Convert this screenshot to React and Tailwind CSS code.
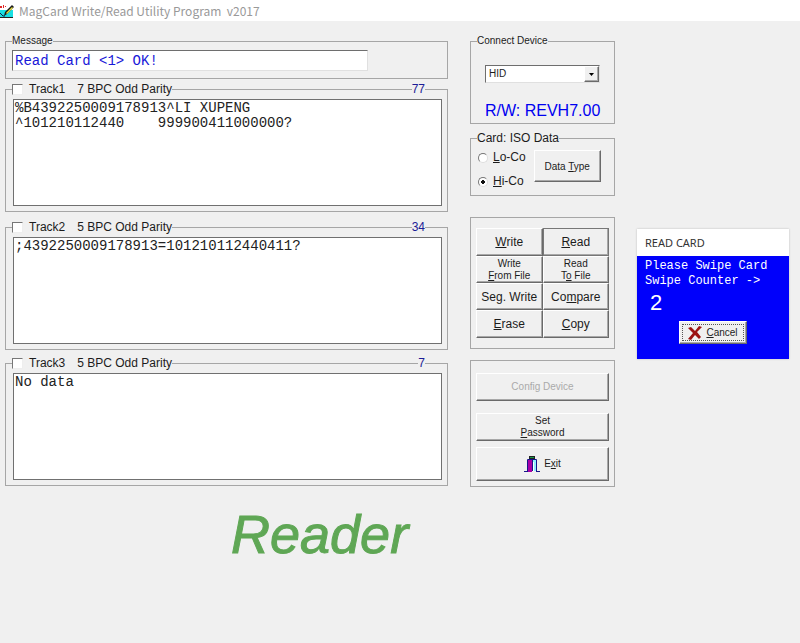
import React, { useState } from "react";

const SANS = "font-['Liberation_Sans',Arial,sans-serif]";
const MONO = "font-['Liberation_Mono','Courier_New',monospace]";
const FRAME = "min-w-0 border border-[#a6a6a6]";
const SUNKEN = "border border-t-[#6e6e6e] border-l-[#6e6e6e] border-r-[#e0e0e0] border-b-[#e0e0e0] bg-white";
const RAISED =
  "border border-t-white border-l-white border-r-[#6a6a6a] border-b-[#6a6a6a] bg-[#f0f0f0] shadow-[inset_-1px_-1px_0_#a8a8a8]";

function Line({ className }) {
  return <span className={`h-px bg-[#a6a6a6] ${className}`} />;
}

function Track({ number, format, count, value, className }) {
  const [text, setText] = useState(value);
  const id = `track${number}`;
  return (
    <fieldset className={`${FRAME} ${className}`}>
      <legend className="flex h-[14px] w-full items-center text-[12px] leading-[14px]">
        <Line className="w-1.5" />
        <input
          id={id}
          type="checkbox"
          className="h-[11px] w-[11px] appearance-none border border-t-[#777] border-l-[#777] border-r-[#eee] border-b-[#eee] bg-white checked:bg-[#444]"
        />
        <label htmlFor={id} className="flex gap-3 pl-1.5">
          <span>Track{number}</span>
          <span>{format} Odd Parity</span>
        </label>
        <Line className="flex-1" />
        <span className="text-[#1c1c96]">{count}</span>
        <Line className="w-[22px]" />
      </legend>
      <div className="pt-[3px] pr-[5px] pb-[5px] pl-[7px]">
        <textarea
          aria-label={`Track ${number} data`}
          spellCheck={false}
          value={text}
          onChange={(e) => setText(e.target.value)}
          className={`block h-[107px] w-full resize-none border border-[#707070] bg-white px-px py-px text-[14px] leading-[15px] text-[#222] outline-none ${MONO}`}
        />
      </div>
    </fieldset>
  );
}

function PushButton({ className = "", children, ...rest }) {
  return (
    <button type="button" className={`flex items-center justify-center text-center ${RAISED} ${className}`} {...rest}>
      {children}
    </button>
  );
}

function AppIcon() {
  return (
    <svg width="15" height="16" viewBox="0 0 15 16" aria-hidden="true">
      <path d="M0 7h13v8H0z" fill="#19dfe3" />
      <path d="M0 14h13v1H0z" fill="#222" />
      <path d="M0 3h2v2H0zM3 2h1v3H3zM5 3h1v1H5z" fill="#e02828" />
      <path d="M4 13l1-4 7-7 2 2-7 7z" fill="#1a1a1a" />
      <path d="M6 10l6-6 1 1-6 6z" fill="#e2dc3c" />
      <path d="M0 10l3 3h2" stroke="#124" fill="none" />
    </svg>
  );
}

function ExitIcon() {
  return (
    <svg width="16" height="17" viewBox="0 0 16 17" aria-hidden="true">
      <path d="M5 0h6v3H5z" fill="#222" />
      <path d="M6 1h4v1H6z" fill="#159a48" />
      <path d="M8 4h4v11H8z" fill="#8fefff" />
      <path d="M9 6h1v9H9z" fill="#fff" />
      <path d="M4 4h4v12H4z" fill="#a800a8" />
      <path d="M3.500 15.500V3.500h9v12M8.500 4v11" stroke="#16168a" fill="none" />
      <path d="M0 15.500h4M12 15.500h4" stroke="#16168a" />
    </svg>
  );
}

function CancelIcon() {
  return (
    <svg width="14" height="14" viewBox="0 0 14 14" aria-hidden="true">
      <path d="M0 2l3-1 4 4 4-5 3 1-5 5 4 5-2 2-4-4-4 5-3-1 5-6z" fill="#9c1212" />
    </svg>
  );
}

export default function App() {
  const [message, setMessage] = useState("Read Card <1> OK!");
  return (
    <div className={`min-h-screen bg-[#f0f0f0] text-[#1c1c1c] ${SANS}`}>
      <header className="flex h-[21px] items-center gap-1 bg-white">
        <AppIcon />
        <h1 className="whitespace-pre font-['Noto_Sans_CJK_SC','Noto_Sans',sans-serif] text-[12px] leading-[16px] text-[#999]">
          {"MagCard Write/Read Utility Program  v2017"}
        </h1>
      </header>

      <main className="flex items-start gap-[22px] pt-[14px] pr-[11px] pl-[5px]">
        <div className="min-w-0 flex-1">
          <fieldset className={FRAME}>
            <legend className="ml-1.5 h-3 text-[10px] leading-3">
              <label htmlFor="message">Message</label>
            </legend>
            <div className="pt-[3px] pr-[79px] pb-[7px] pl-1.5">
              <input
                id="message"
                value={message}
                onChange={(e) => setMessage(e.target.value)}
                className={`block h-[21px] w-full px-0.5 text-[14px] leading-[16px] text-[#1818d8] outline-none ${SUNKEN} ${MONO}`}
              />
            </div>
          </fieldset>
          <Track
            number={1}
            format="7 BPC"
            count={77}
            value={"%B4392250009178913^LI XUPENG\n^101210112440    999900411000000?"}
            className="mt-[3px]"
          />
          <Track number={2} format="5 BPC" count={34} value=";4392250009178913=101210112440411?" className="mt-2" />
          <Track number={3} format="5 BPC" count={7} value="No data" className="mt-1.5" />
          <p className="mt-[18px] ml-[226px] text-[54px] leading-[60px] text-[#5fa755] italic [-webkit-text-stroke:1px_#5fa755]">
            Reader
          </p>
        </div>

        <div className="w-[145px] shrink-0">
          <fieldset className={`${FRAME} pb-0.5`}>
            <legend className="ml-1.5 h-3 text-[10px] leading-3">
              <label htmlFor="device">Connect Device</label>
            </legend>
            <div className="relative mx-[14px] mt-[18px]">
              <select
                id="device"
                className={`block h-[18px] w-full appearance-none pl-[3px] text-[10px] leading-3 outline-none ${SUNKEN}`}
              >
                <option>HID</option>
              </select>
              <span
                className={`pointer-events-none absolute top-px right-px flex h-4 w-[15px] items-center justify-center ${RAISED}`}
              >
                <svg width="5" height="3" viewBox="0 0 5 3" aria-hidden="true">
                  <path d="M0 0h5L2.500 3z" fill="#000" />
                </svg>
              </span>
            </div>
            <p className="mt-[18px] pl-[14px] text-[16px] leading-[20px] whitespace-nowrap text-[#0000f0]">
              R/W: REVH7.00
            </p>
          </fieldset>

          <fieldset className={`${FRAME} mt-[7px]`}>
            <legend className="ml-1.5 h-[14px] text-[12px] leading-[14px]">Card: ISO Data</legend>
            <div className="flex gap-2 pt-[5px] pb-1.5 pl-[7px]">
              <div className="flex flex-col gap-[9px] text-[12px] leading-[15px]">
                {[
                  ["L", "o-Co", false],
                  ["H", "i-Co", true],
                ].map(([key, rest, on]) => (
                  <label key={key} className="flex items-center gap-[5px]">
                    <input
                      type="radio"
                      name="coercivity"
                      defaultChecked={on}
                      className="h-[10px] w-[10px] appearance-none rounded-full border border-t-[#777] border-r-[#ddd] border-b-[#ddd] border-l-[#777] bg-white checked:bg-[radial-gradient(circle,#111_0_2px,#fff_2px)]"
                    />
                    <span>
                      <u>{key}</u>
                      {rest}
                    </span>
                  </label>
                ))}
              </div>
              <PushButton className="h-[32px] w-[67px] text-[10px]">
                <span>
                  Data <u>T</u>ype
                </span>
              </PushButton>
            </div>
          </fieldset>

          <div className={`${FRAME} mt-[21px] grid grid-cols-2 px-[5px] pt-[10px] pb-[10px]`}>
            <PushButton className="h-[28px] text-[12px]">
              <span><u>W</u>rite</span>
            </PushButton>
            <PushButton className="h-[28px] text-[12px] outline outline-1 -outline-offset-1 outline-[#777]">
              <span><u>R</u>ead</span>
            </PushButton>
            <PushButton className="h-[27px] text-[10px] leading-3">
              <span>Write<br /><u>F</u>rom File</span>
            </PushButton>
            <PushButton className="h-[27px] text-[10px] leading-3">
              <span>Read<br />T<u>o</u> File</span>
            </PushButton>
            <PushButton className="h-[27px] text-[12px] whitespace-nowrap">
              <span>Se<u>g</u>. Write</span>
            </PushButton>
            <PushButton className="h-[27px] text-[12px]">
              <span>Co<u>m</u>pare</span>
            </PushButton>
            <PushButton className="h-[28px] text-[12px]">
              <span><u>E</u>rase</span>
            </PushButton>
            <PushButton className="h-[28px] text-[12px]">
              <span><u>C</u>opy</span>
            </PushButton>
          </div>

          <div className={`${FRAME} mt-[11px] flex flex-col px-[5px] pt-3 pb-[5px] text-[10px] leading-3`}>
            <PushButton disabled className="h-[28px] text-[#aaa]">
              Config Device
            </PushButton>
            <PushButton className="mt-3 h-[28px]">
              <span>Set<br /><u>P</u>assword</span>
            </PushButton>
            <PushButton className="mt-1.5 h-[34px] gap-1">
              <ExitIcon />
              <span>E<u>x</u>it</span>
            </PushButton>
          </div>
        </div>

        <section
          role="dialog"
          aria-labelledby="read-card"
          className="mt-[194px] w-[152px] shrink-0 bg-[#0000fb] shadow-[0_0_2px_#bbb]"
        >
          <h2
            id="read-card"
            className="h-[27px] bg-white pl-2 font-['Noto_Sans',sans-serif] text-[11px] leading-[27px] text-[#333]"
          >
            READ CARD
          </h2>
          <div className="pt-[3px] pb-[15px] text-white">
            <p className={`pl-2 text-[12px] leading-[15px] whitespace-nowrap ${MONO}`}>
              Please Swipe Card
              <br />
              Swipe Counter -&gt;
            </p>
            <p className="pl-[13px] text-[22px] leading-7">2</p>
            <PushButton className="mx-auto mt-1 h-[23px] w-[68px] p-0.5 text-[10px] text-[#1c1c1c]">
              <span className="flex h-full w-full items-center justify-center gap-1 border border-dotted border-[#555]">
                <CancelIcon />
                <span><u>C</u>ancel</span>
              </span>
            </PushButton>
          </div>
        </section>
      </main>
    </div>
  );
}
